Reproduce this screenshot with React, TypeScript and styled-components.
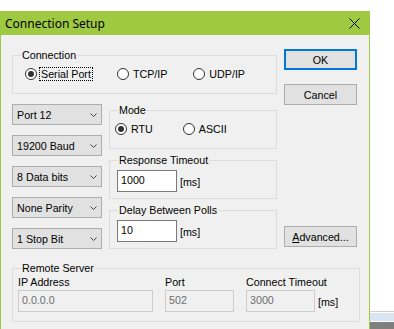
import React from "react";
import styled, { createGlobalStyle } from "styled-components";

const GlobalStyle = createGlobalStyle`
  html, body, #root {
    height: 100%;
  }
  body {
    margin: 0;
    overflow: hidden;
    background: #ffffff;
    font-family: "Liberation Sans", Arial, sans-serif;
    font-size: 10.7px;
    color: #000000;
  }
`;

const Screen = styled.div`
  display: flex;
  align-items: flex-start;
  height: 100%;
`;

const Window = styled.div`
  margin-top: 11px;
  width: 370px;
  height: 318px;
  box-sizing: border-box;
  border-left: 1px solid #9fc940;
  border-right: 1px solid #9fc940;
  background: #f0f0f0;
  display: flex;
  flex-direction: column;
  overflow: hidden;
  flex-shrink: 0;
`;

const TitleBar = styled.div`
  height: 24px;
  flex-shrink: 0;
  background: #9fc940;
  display: flex;
  align-items: center;
  justify-content: space-between;
  padding: 0 9px 0 4px;
`;

const Title = styled.span`
  font-family: "Noto Sans", "Noto Sans CJK SC", sans-serif;
  font-size: 12px;
  padding-top: 1px;
`;

const Body = styled.div`
  padding: 14px 11px 0;
  display: flex;
  flex-direction: column;
`;

const TopSection = styled.div`
  display: flex;
  gap: 7px;
`;

const LeftCol = styled.div`
  width: 265px;
  display: flex;
  flex-direction: column;
  gap: 10px;
`;

const Group = styled.fieldset`
  margin: 0;
  padding: 0;
  min-width: 0;
  border: 1px solid #dcdcdc;
`;

const Legend = styled.legend`
  margin-left: 8px;
  padding: 0 1px;
  font-size: 10.7px;
  line-height: 12px;
`;

const GroupBody = styled.div<{ $pad: string }>`
  padding: ${(p) => p.$pad};
`;

const RadioRow = styled.div<{ $gap: number }>`
  display: flex;
  align-items: center;
  gap: ${(p) => p.$gap}px;
`;

const RadioLabel = styled.label`
  display: inline-flex;
  align-items: center;
  gap: 2px;
`;

const Circle = styled.span<{ $checked?: boolean }>`
  width: 12px;
  height: 12px;
  box-sizing: border-box;
  border: 1px solid #333333;
  border-radius: 50%;
  background: #ffffff;
  display: grid;
  place-items: center;
  &::after {
    content: "";
    width: 6px;
    height: 6px;
    border-radius: 50%;
    background: ${(p) => (p.$checked ? "#333333" : "transparent")};
  }
`;

const RadioText = styled.span<{ $focus?: boolean }>`
  line-height: 12px;
  padding: 0 1px;
  border: 1px ${(p) => (p.$focus ? "dotted #000000" : "solid transparent")};
`;

const LowerSection = styled.div`
  display: grid;
  grid-template-columns: 90px 168px;
  gap: 7px;
`;

const ComboCol = styled.div`
  display: flex;
  flex-direction: column;
  gap: 10px;
`;

const Combo = styled.div`
  height: 21px;
  box-sizing: border-box;
  border: 1px solid #adadad;
  background: #e1e1e1;
  display: flex;
  align-items: center;
  justify-content: space-between;
  padding: 0 4px 0 4px;
`;

const GroupCol = styled.div`
  display: flex;
  flex-direction: column;
  gap: 5px;
`;

const EditRow = styled.div`
  display: flex;
  align-items: center;
`;

const Edit = styled.input<{ $width: number }>`
  width: ${(p) => p.$width}px;
  height: 22px;
  box-sizing: border-box;
  margin: 0;
  padding: 0 3px 3px;
  border: 1px solid #7a7a7a;
  background: #ffffff;
  font-family: "Liberation Sans", Arial, sans-serif;
  font-size: 10.7px;
  color: #000000;
  outline: none;
  &:disabled {
    border-color: #cccccc;
    background: #f0f0f0;
    color: #6d6d6d;
  }
`;

const Unit = styled.span`
  margin-left: 3px;
  padding-top: 1px;
`;

const ButtonCol = styled.div`
  width: 73px;
  display: flex;
  flex-direction: column;
`;

const Button = styled.button<{ $primary?: boolean }>`
  width: 73px;
  height: 21px;
  box-sizing: border-box;
  margin: 0;
  padding: 0;
  border: ${(p) => (p.$primary ? "2px solid #0078d7" : "1px solid #adadad")};
  background: #e1e1e1;
  font-family: "Liberation Sans", Arial, sans-serif;
  font-size: 10.7px;
  color: #000000;
`;

const CancelButton = styled(Button)`
  margin-top: 14px;
`;

const AdvancedButton = styled(Button)`
  margin-top: auto;
  margin-bottom: 2px;
`;

const RemoteGroup = styled(Group)`
  margin-top: 13px;
  margin-right: -2px;
`;

const FieldsRow = styled.div`
  display: flex;
  gap: 12px;
`;

const Field = styled.div`
  display: flex;
  flex-direction: column;
  gap: 1px;
`;

const FieldLabel = styled.span`
  line-height: 13px;
`;

const Backdrop = styled.div`
  flex: 1;
  align-self: stretch;
  display: flex;
  flex-direction: column;
  justify-content: flex-end;
`;

const Band = styled.div<{ $color: string; $h: number }>`
  height: ${(p) => p.$h}px;
  background: ${(p) => p.$color};
`;

const Chevron = () => (
  <svg width="7" height="4" viewBox="0 0 7 4">
    <polyline points="0.5,0.5 3.5,3.5 6.5,0.5" fill="none" stroke="#444" strokeWidth="1" />
  </svg>
);

const CloseIcon = () => (
  <svg width="11" height="11" viewBox="0 0 11 11">
    <path d="M0.5 0.5 L10.5 10.5 M10.5 0.5 L0.5 10.5" stroke="#000" strokeWidth="1" />
  </svg>
);

const Radio = ({ label, checked, focus }: { label: string; checked?: boolean; focus?: boolean }) => (
  <RadioLabel>
    <Circle $checked={checked} />
    <RadioText $focus={focus}>{label}</RadioText>
  </RadioLabel>
);

const combos = ["Port 12", "19200 Baud", "8 Data bits", "None Parity", "1 Stop Bit"];

const App = () => {
  return (
    <>
      <GlobalStyle />
      <Screen>
        <Window>
          <TitleBar>
            <Title>Connection Setup</Title>
            <CloseIcon />
          </TitleBar>
          <Body>
            <TopSection>
              <LeftCol>
                <Group>
                  <Legend>Connection</Legend>
                  <GroupBody $pad="6px 0 12px 12px">
                    <RadioRow $gap={24}>
                      <Radio label="Serial Port" checked focus />
                      <Radio label="TCP/IP" />
                      <Radio label="UDP/IP" />
                    </RadioRow>
                  </GroupBody>
                </Group>
                <LowerSection>
                  <ComboCol>
                    {combos.map((c) => (
                      <Combo key={c}>
                        <span>{c}</span>
                        <Chevron />
                      </Combo>
                    ))}
                  </ComboCol>
                  <GroupCol>
                    <Group>
                      <Legend>Mode</Legend>
                      <GroupBody $pad="6px 0 12px 5px">
                        <RadioRow $gap={28}>
                          <Radio label="RTU" checked />
                          <Radio label="ASCII" />
                        </RadioRow>
                      </GroupBody>
                    </Group>
                    <Group>
                      <Legend>Response Timeout</Legend>
                      <GroupBody $pad="4px 0 6px 7px">
                        <EditRow>
                          <Edit $width={60} defaultValue="1000" />
                          <Unit>[ms]</Unit>
                        </EditRow>
                      </GroupBody>
                    </Group>
                    <Group>
                      <Legend>Delay Between Polls</Legend>
                      <GroupBody $pad="4px 0 6px 7px">
                        <EditRow>
                          <Edit $width={60} defaultValue="10" />
                          <Unit>[ms]</Unit>
                        </EditRow>
                      </GroupBody>
                    </Group>
                  </GroupCol>
                </LowerSection>
              </LeftCol>
              <ButtonCol>
                <Button $primary>OK</Button>
                <CancelButton>Cancel</CancelButton>
                <AdvancedButton>
                  <u>A</u>dvanced...
                </AdvancedButton>
              </ButtonCol>
            </TopSection>
            <RemoteGroup>
              <Legend>Remote Server</Legend>
              <GroupBody $pad="2px 0 9px 5px">
                <FieldsRow>
                  <Field>
                    <FieldLabel>IP Address</FieldLabel>
                    <Edit $width={135} defaultValue="0.0.0.0" disabled />
                  </Field>
                  <Field>
                    <FieldLabel>Port</FieldLabel>
                    <Edit $width={69} defaultValue="502" disabled />
                  </Field>
                  <Field>
                    <FieldLabel>Connect Timeout</FieldLabel>
                    <EditRow>
                      <Edit $width={69} defaultValue="3000" disabled />
                      <Unit>[ms]</Unit>
                    </EditRow>
                  </Field>
                </FieldsRow>
              </GroupBody>
            </RemoteGroup>
          </Body>
        </Window>
        <Backdrop>
          <Band $color="#cfcfcf" $h={1} />
          <Band $color="#ffffff" $h={1} />
          <Band $color="#d9e5f3" $h={8} />
          <Band $color="#ffffff" $h={1} />
          <Band $color="#808080" $h={7} />
        </Backdrop>
      </Screen>
    </>
  );
};

export default App;
